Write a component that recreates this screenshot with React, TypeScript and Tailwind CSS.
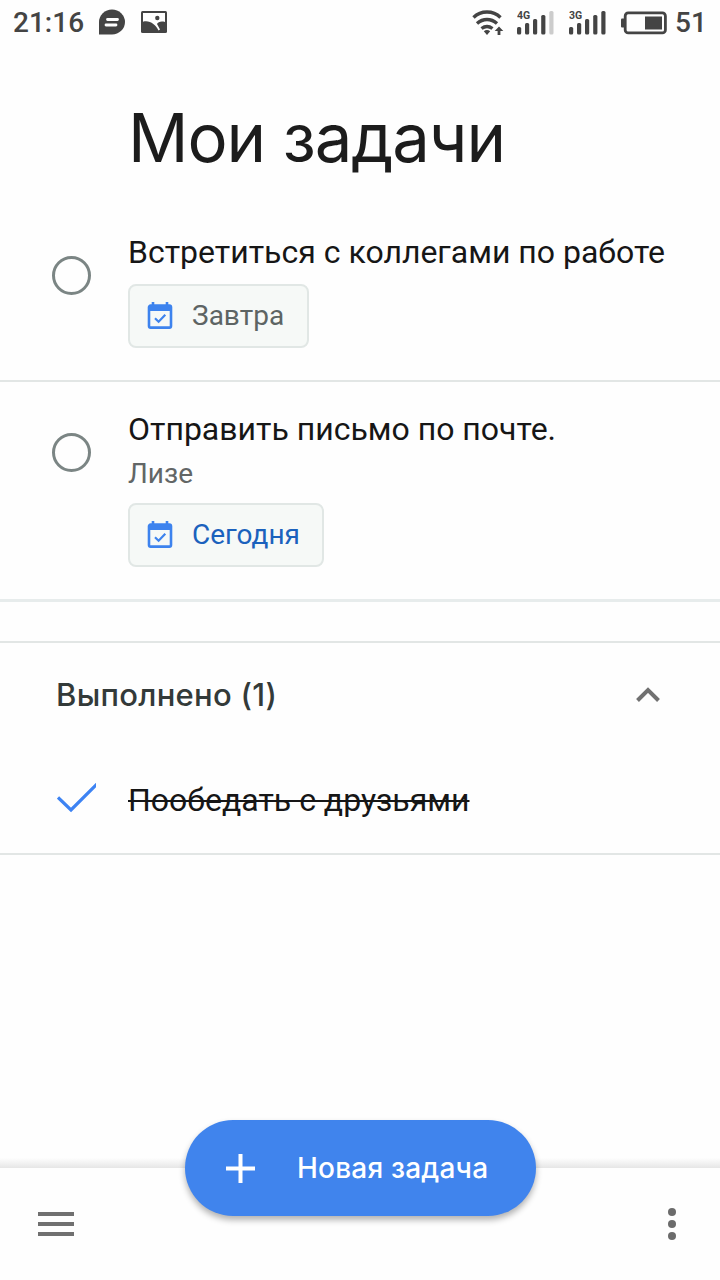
import React from "react";

const CalendarIcon = () => (
  <svg className="h-7 w-[26px] shrink-0" viewBox="0 0 26 28" fill="none">
    <path d="M6 0v4M20 0v4" stroke="#3d83ee" strokeWidth="2.6" />
    <rect x="2" y="3.600" width="22" height="22" rx="1.600" stroke="#3d83ee" strokeWidth="2.600" />
    <path d="M2 3.500h22V9H2z" fill="#3d83ee" />
    <path d="M8 16.200l3.600 3.500 6.700-6.900" stroke="#3d83ee" strokeWidth="2.200" />
  </svg>
);

const Signal = ({ label, weak }: { label: string; weak?: boolean }) => (
  <svg className="h-7 w-[38px]" viewBox="0 0 38 28">
    <text x="0" y="9.800" fontSize="10.5" fontWeight="700" fontFamily="Roboto, sans-serif" fill="#444">
      {label}
    </text>
    <g fill="#444">
      <rect x="0" y="18" width="4.200" height="7.500" rx="1.500" />
      <rect x="8" y="14" width="4.200" height="11.500" rx="1.500" />
      <rect x="16" y="10" width="4.200" height="15.500" rx="1.500" />
      <rect x="24.200" y="6" width="4.200" height="19.500" rx="1.500" />
      <rect x="32.300" y="2" width="4.200" height="23.500" rx="1.500" fill={weak ? "#ccc" : "#444"} />
    </g>
  </svg>
);

const Chip = ({ children, className }: { children: React.ReactNode; className: string }) => (
  <button
    className={`flex h-16 items-center rounded-lg border-2 border-[#e1e7e5] bg-[#f6f9f7] pl-[17px] text-[28px] ${className}`}
  >
    <CalendarIcon />
    <span className="ml-[19px] whitespace-nowrap">{children}</span>
  </button>
);

const Circle = () => <span className="h-[39px] w-[39px] shrink-0 rounded-full border-3 border-[#7b8584]" />;

const StatusBar = () => (
  <header className="flex h-[45px] items-center text-[28px] font-medium text-[#444]">
    <span className="ml-[13px] w-[73px] whitespace-nowrap">21:16</span>
    <svg className="-mt-px ml-[13px] h-[26px] w-[26px]" viewBox="0 0 26 26">
      <path d="M0 25.500V13A13 12.500 0 1 1 13 25.500Z" fill="#444" />
      <path d="M8.500 10.500h10M7 16h10" stroke="#fff" strokeWidth="2.800" strokeLinecap="round" />
    </svg>
    <svg className="-mt-px ml-4 h-[22px] w-[26px]" viewBox="0 0 26 22">
      <rect width="26" height="22" rx="1.500" fill="#444" />
      <path d="M2 2h22v9c-4-1.200-7 0-8 2l3 5.500-1.500 1C14.500 13.500 8.500 8.800 2 10.800z" fill="#fff" />
      <circle cx="16.300" cy="7" r="2.200" fill="#444" />
    </svg>
    <div className="ml-auto flex items-center">
      <svg className="h-7 w-8" viewBox="0 0 32 28" fill="none" stroke="#444" strokeWidth="3.400">
        <path d="M1.500 8.500C9 1.200 21 1.200 28.500 8.500M5 14.500c6-5.300 14-5.300 20 0M9.500 19.500c3.800-2.800 7.200-2.800 11 0" />
        <path d="M11.800 22.300a5 5 0 0 1 6.400 0L15 26z" fill="#444" stroke="none" />
        <path d="M27 17.500l4.300 4.500h-2.900V26h-2.800v-4h-2.900z" fill="#444" stroke="none" />
      </svg>
      <span className="ml-[13px] flex"><Signal label="4G" weak /></span>
      <span className="ml-3.5 flex"><Signal label="3G" /></span>
      <svg className="ml-3.5 h-6 w-[46px]" viewBox="0 0 46 24">
        <rect x="0" y="7.500" width="4" height="9" rx="1" fill="#444" />
        <rect x="4.200" y="1.900" width="40.200" height="20" rx="3" fill="none" stroke="#444" strokeWidth="2.800" />
        <rect x="24" y="5.500" width="17" height="13" fill="#444" />
      </svg>
      <span className="ml-2 w-[45px]">51</span>
    </div>
  </header>
);

export default function App() {
  return (
    <div className="relative flex h-[1280px] w-[720px] flex-col overflow-hidden bg-[#fefefe] font-[Roboto,'Noto_Sans',sans-serif] text-[#161616]">
      <StatusBar />
      <h1 className="mt-[45px] h-[97px] pl-32 font-[Inter,sans-serif] text-[67px] leading-[96px] tracking-[-1.1px] whitespace-nowrap text-[#1c1c1c]">
        Мои задачи
      </h1>
      <section className="flex h-[195px] border-b-2 border-[#e2e6e5] pt-[45px]">
        <div className="flex w-32 pt-6 pl-[51.5px]"><Circle /></div>
        <div className="flex flex-col items-start">
          <p className="h-10 text-[32px] leading-10 whitespace-nowrap">Встретиться с коллегами по работе</p>
          <Chip className="mt-3 w-[181px] text-[#5d6463]">Завтра</Chip>
        </div>
      </section>
      <section className="flex h-[220px] border-b-3 border-[#e7ecec] pt-[27px]">
        <div className="flex w-32 pt-6 pl-[51.5px]"><Circle /></div>
        <div className="flex flex-col items-start">
          <p className="h-10 text-[32px] leading-10 whitespace-nowrap">Отправить письмо по почте.</p>
          <p className="mt-[5px] h-10 text-[28px] leading-10 text-[#626666]">Лизе</p>
          <Chip className="mt-[9px] w-[196px] text-[#1b62bd]">Сегодня</Chip>
        </div>
      </section>
      <section className="mt-[39px] h-[214px] border-y-2 border-[#e2e6e5]">
        <div className="flex h-[104px] items-center justify-between pr-[59px] pl-14">
          <h2 className="font-[Inter,sans-serif] text-[31px] font-medium tracking-[0.28px] whitespace-nowrap text-[#333a39]">Выполнено (1)</h2>
          <svg className="h-4 w-[26px]" viewBox="0 0 26 16" fill="none">
            <path d="M2.500 13.500L13 3l10.500 10.500" stroke="#717171" strokeWidth="4" />
          </svg>
        </div>
        <div className="flex h-[106px] items-center pl-[57px]">
          <svg className="-mt-1 h-[30px] w-[39px]" viewBox="0 0 39 30" fill="none">
            <path d="M1 14.500L14 27 40 1" stroke="#3d83f3" strokeWidth="3.200" />
          </svg>
          <p className="ml-8 text-[32px] whitespace-nowrap line-through decoration-2">Пообедать с друзьями</p>
        </div>
      </section>
      <footer className="mt-auto flex h-[122px] flex-col">
        <div className="h-2.5 shrink-0 bg-linear-to-b from-[#fefefe] to-[#e6e6e6]" />
        <div className="flex flex-1 items-center justify-between pr-11 pl-[38px]">
          <button aria-label="Меню" className="flex flex-col gap-1.5">
            <span className="h-1 w-9 bg-[#707070]" />
            <span className="h-1 w-9 bg-[#707070]" />
            <span className="h-1 w-9 bg-[#707070]" />
          </button>
          <button aria-label="Ещё" className="flex flex-col gap-1">
            <span className="h-2 w-2 rounded-full bg-[#6b6b6b]" />
            <span className="h-2 w-2 rounded-full bg-[#6b6b6b]" />
            <span className="h-2 w-2 rounded-full bg-[#6b6b6b]" />
          </button>
        </div>
      </footer>
      <button className="absolute bottom-16 left-[185px] flex h-24 w-[351px] items-center rounded-full bg-[#4084ed] pl-[41px] font-[Inter,sans-serif] text-[28px] font-medium tracking-[0.2px] text-white shadow-[0_4px_6px_rgba(0,0,0,0.3)]">
        <svg className="h-[29px] w-[29px]" viewBox="0 0 29 29">
          <path d="M14.500 0v29M0 14.500h29" stroke="#fff" strokeWidth="4" />
        </svg>
        <span className="ml-[42px] whitespace-nowrap">Новая задача</span>
      </button>
    </div>
  );
}
